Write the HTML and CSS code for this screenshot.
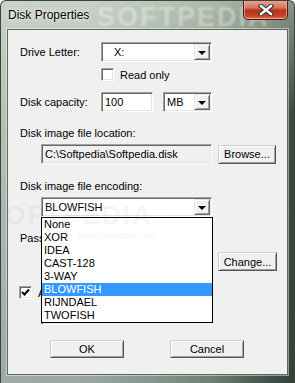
FILE: index.html
```html
<!DOCTYPE html>
<html lang="en">

<head>
    <meta charset="utf-8">
    <title>Disk Properties</title>
    <link rel="stylesheet" href="styles.css">
</head>

<body>
    <div class="window">
        <div class="titlebar">
            <span class="title">Disk Properties</span>
            <span class="mark-title">SOFTPEDIA</span>
            <div class="close">
                <svg width="16" height="12" viewBox="0 0 16 12">
                    <path d="M3 2 L13 10 M13 2 L3 10" stroke="#3a2a2a" stroke-width="4.4" stroke-linecap="square"/>
                    <path d="M3 2 L13 10 M13 2 L3 10" stroke="#ffffff" stroke-width="2.4" stroke-linecap="square"/>
                </svg>
            </div>
        </div>

        <div class="client">
            <div class="row">
                <span class="label">Drive Letter:</span>
                <div class="combo w-drive">
                    <span class="combo-text indent">X:</span>
                    <span class="drop"><i></i></span>
                </div>
            </div>

            <div class="row check-row">
                <span class="check"></span>
                <span class="check-label">Read only</span>
            </div>

            <div class="row cap-row">
                <span class="label">Disk capacity:</span>
                <div class="field w-cap">100</div>
                <div class="combo w-unit">
                    <span class="combo-text">MB</span>
                    <span class="drop"><i></i></span>
                </div>
            </div>

            <p class="caption loc-caption">Disk image file location:</p>
            <div class="row sub-row">
                <div class="field readonly w-path">C:\Softpedia\Softpedia.disk</div>
                <button class="btn w-small" type="button">Browse...</button>
            </div>

            <p class="caption enc-caption">Disk image file encoding:</p>
            <div class="row sub-row">
                <div class="combo w-path">
                    <span class="combo-text">BLOWFISH</span>
                    <span class="drop"><i></i></span>
                </div>
            </div>

            <p class="caption pass-caption">Password:</p>
            <div class="row pass-row">
                <button class="btn w-change" type="button">Change...</button>
            </div>

            <div class="row auto-row">
                <span class="check checked">
                    <svg width="9" height="9" viewBox="0 0 9 9">
                        <path d="M1 4 L3.5 6.5 L8 1.5" fill="none" stroke="#000" stroke-width="2"/>
                    </svg>
                </span>
                <span class="check-label">Automount</span>
            </div>

            <div class="row sub-row hidden-row">
                <div class="field w-hidden"></div>
            </div>

            <div class="row buttons">
                <button class="btn w-dlg" type="button">OK</button>
                <button class="btn w-dlg" type="button">Cancel</button>
            </div>

            <!-- open list of the encoding combo -->
            <ul class="droplist">
                <li>None</li>
                <li>XOR</li>
                <li>IDEA</li>
                <li>CAST-128</li>
                <li>3-WAY</li>
                <li class="selected">BLOWFISH</li>
                <li>RIJNDAEL</li>
                <li>TWOFISH</li>
            </ul>

            <span class="mark-mid">SOFTPEDIA<sup>™</sup></span>
            <span class="mark-url">www.softpedia.com</span>
        </div>
    </div>
</body>

</html>
```

FILE: styles.css
```css
body {
    margin: 0;
    font-family: "Liberation Sans", Arial, sans-serif;
    font-size: 11px;
    color: #000000;
    background: #ffffff;
}

.window {
    position: relative;
    width: 295px;
    height: 383px;
    box-sizing: border-box;
    overflow: hidden;
    background:
        linear-gradient(180deg, rgba(220, 228, 220, 0.55) 0%, rgba(200, 210, 200, 0.15) 30%, rgba(90, 110, 130, 0.25) 100%),
        linear-gradient(90deg, #b3beb2 0%, #aeb9ac 30%, #93a391 52%, #74856f 72%, #42523f 88%, #223022 100%);
    border: 1px solid #3b453b;
    border-bottom: none;
    border-radius: 6px 6px 0 0;
}

.titlebar {
    position: relative;
    height: 28px;
}

.title {
    position: absolute;
    left: 7px;
    top: 7px;
    font-size: 12px;
    line-height: 15px;
    text-shadow: 0 0 6px rgba(255, 255, 255, 0.9), 0 0 2px rgba(255, 255, 255, 0.9);
    z-index: 2;
}

.mark-title {
    position: absolute;
    left: 96px;
    top: 1px;
    font-size: 27px;
    font-weight: bold;
    letter-spacing: 2px;
    color: rgba(255, 255, 255, 0.35);
    filter: blur(1.2px);
}

.close {
    position: absolute;
    right: 6px;
    top: -1px;
    width: 45px;
    height: 20px;
    box-sizing: border-box;
    border: 1px solid #4e1a12;
    border-top: none;
    border-radius: 0 0 5px 5px;
    background: linear-gradient(180deg, #e8a996 0%, #d3765e 40%, #b8331c 55%, #c4452a 85%, #e07a55 100%);
    box-shadow: inset 0 0 0 1px rgba(255, 220, 200, 0.5);
    display: flex;
    align-items: center;
    justify-content: center;
}

.client {
    position: relative;
    margin: 0 6px;
    height: 346px;
    box-sizing: border-box;
    padding: 12px 9px 0 12px;
    background: #f0f0f0;
    border: 1px solid #5d685d;
    box-shadow: 0 0 0 1px rgba(255, 255, 255, 0.45);
}

.row {
    display: flex;
    align-items: center;
    height: 20px;
}

.label {
    width: 81px;
    flex: none;
}

.caption {
    margin: 0;
    line-height: 13px;
}

/* sunken text field */
.field {
    height: 20px;
    box-sizing: border-box;
    padding: 2px 3px 0 3px;
    line-height: 14px;
    background: #ffffff;
    border: 1px solid;
    border-color: #a0a0a0 #ffffff #ffffff #a0a0a0;
    box-shadow: inset 1px 1px #696969, inset -1px -1px #e3e3e3;
    white-space: nowrap;
    overflow: hidden;
}

.field.readonly {
    background: #f0f0f0;
}

.combo {
    display: flex;
    align-items: center;
    height: 20px;
    box-sizing: border-box;
    padding: 2px;
    background: #ffffff;
    border: 1px solid;
    border-color: #a0a0a0 #ffffff #ffffff #a0a0a0;
    box-shadow: inset 1px 1px #696969, inset -1px -1px #e3e3e3;
}

.combo-text {
    flex: 1;
    padding-left: 1px;
    line-height: 14px;
}

.combo-text.indent {
    padding-left: 10px;
}

.drop {
    width: 16px;
    height: 16px;
    margin-right: -1px;
    box-sizing: border-box;
    background: #f0f0f0;
    border: 1px solid;
    border-color: #e3e3e3 #696969 #696969 #e3e3e3;
    box-shadow: inset 1px 1px #ffffff, inset -1px -1px #a0a0a0;
    display: flex;
    align-items: center;
    justify-content: center;
}

.drop i {
    width: 0;
    height: 0;
    margin-top: 1px;
    border-left: 4px solid transparent;
    border-right: 4px solid transparent;
    border-top: 4px solid #000000;
}

.w-drive { width: 111px; }
.w-cap { width: 52px; }
.w-unit { width: 49px; margin-left: 10px; }
.w-path { width: 171px; }
.w-small { width: 58px; margin-left: 6px; height: 19px; }
.w-change { width: 59px; height: 19px; margin-left: 198px; }
.w-hidden { width: 32px; }
.w-dlg { width: 74px; height: 18px; }

.check {
    width: 13px;
    height: 13px;
    box-sizing: border-box;
    background: #ffffff;
    border: 1px solid;
    border-color: #a0a0a0 #ffffff #ffffff #a0a0a0;
    box-shadow: inset 1px 1px #696969, inset -1px -1px #e3e3e3;
    display: flex;
    align-items: center;
    justify-content: center;
}

.check-label {
    margin-left: 6px;
}

.check-row {
    margin-top: 6px;
    height: 13px;
    padding-left: 81px;
}

.cap-row { margin-top: 11px; }
.loc-caption { margin-top: 15px; }
.enc-caption { margin-top: 16px; }
.pass-caption { margin-top: 15px; }
.sub-row { margin-top: 4px; padding-left: 21px; }
.pass-row { margin-top: 7px; height: 19px; }

.auto-row {
    margin-top: 15px;
    height: 13px;
    margin-left: -1px;
}

.hidden-row { margin-top: 6px; }

.buttons {
    margin-top: 15px;
    height: 18px;
    padding-left: 30px;
    gap: 46px;
}

.btn {
    padding: 0;
    font-family: inherit;
    font-size: 11px;
    color: #000000;
    background: #f0f0f0;
    border: 1px solid;
    border-color: #d0d0d0 #555555 #555555 #d0d0d0;
    box-shadow: inset 1px 1px #ffffff, inset -1px -1px #a0a0a0;
}

.droplist {
    position: absolute;
    left: 33px;
    top: 187px;
    width: 172px;
    margin: 0;
    padding: 0;
    list-style: none;
    box-sizing: border-box;
    background: #ffffff;
    border: 1px solid #000000;
    z-index: 3;
}

.droplist li {
    height: 13px;
    line-height: 13px;
    padding-left: 2px;
}

.droplist li.selected {
    background: #3399ff;
    color: #ffffff;
}

.mark-mid {
    position: absolute;
    left: -22px;
    top: 170px;
    font-size: 26px;
    font-weight: bold;
    letter-spacing: 2px;
    color: rgba(150, 150, 150, 0.1);
    z-index: 4;
}

.mark-mid sup {
    font-size: 9px;
}

.mark-url {
    position: absolute;
    left: 70px;
    top: 201px;
    font-size: 9px;
    color: rgba(150, 150, 150, 0.15);
    z-index: 4;
}
```
